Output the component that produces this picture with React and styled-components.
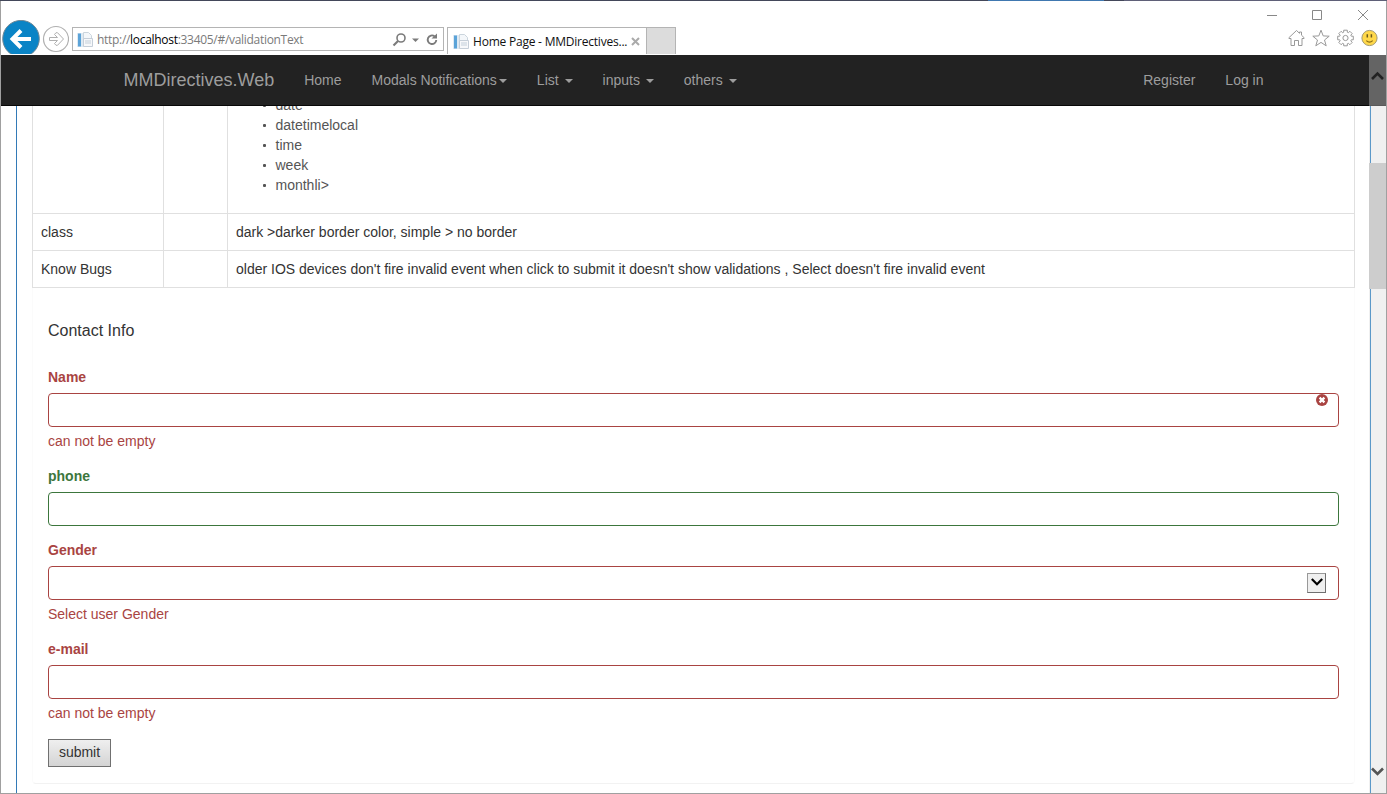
import React from "react";
import styled, { createGlobalStyle } from "styled-components";

const GlobalStyle = createGlobalStyle`
  * { box-sizing: border-box; }
  body {
    margin: 0;
    background: #fff;
    font-family: "Liberation Sans", Arial, sans-serif;
    font-size: 14px;
    line-height: 20px;
    color: #333;
    overflow: hidden;
  }
`;

const Window = styled.div`
  width: 1387px;
  height: 794px;
  display: flex;
  flex-direction: column;
  background: #fff;
  border: 1px solid #a0a0a0;
  border-top: 0;
`;

const DesktopEdge = styled.div`
  height: 1px;
  margin: 0 -1px;
  flex: none;
  background: linear-gradient(to right, #43475a 988px, #4078b0 988px 1104px, #43475a 1104px 1124px, #5f6078 1124px);
`;

const Chrome = styled.header`
  height: 54px;
  flex: none;
  display: flex;
  justify-content: space-between;
  font-family: "Open Sans", "Noto Sans", sans-serif;
  font-size: 12px;
`;

const Toolbar = styled.div`
  display: flex;
  align-items: flex-end;
  height: 53px;
`;

const BackClip = styled.div`
  width: 40px;
  height: 34px;
  overflow: hidden;
  svg { display: block; }
`;

const ForwardButton = styled.div`
  width: 27px;
  height: 28px;
  margin: 0 3px 1px 1px;
  svg { display: block; }
`;

const AddressBar = styled.div`
  width: 372px;
  height: 24px;
  margin-bottom: 3px;
  border: 1px solid #b4b4b4;
  display: flex;
  align-items: center;
  padding: 1px 4px 0 4px;
  color: #7a7a7a;
`;

const Url = styled.span`
  flex: 1;
  margin-left: 4px;
  font-size: 12px;
  letter-spacing: -0.3px;
  white-space: nowrap;
  b { font-weight: 400; color: #000; }
`;

const Tab = styled.div`
  width: 200px;
  height: 27px;
  margin-left: 3px;
  border: 1px solid #b4b4b4;
  border-bottom: 0;
  display: flex;
  align-items: center;
  padding: 1px 6px 0 5px;
  color: #111;
`;

const TabTitle = styled.span`
  flex: 1;
  margin-left: 4px;
  font-size: 12px;
  letter-spacing: -0.22px;
  white-space: nowrap;
`;

const NewTab = styled.div`
  width: 29px;
  height: 27px;
  background: #dcdcdc;
  border: 1px solid #b4b4b4;
  border-width: 1px 1px 0 0;
`;

const WindowSide = styled.div`
  display: flex;
  flex-direction: column;
  align-items: flex-end;
`;

const CaptionButtons = styled.div`
  display: flex;
  gap: 34px;
  padding: 8px 17px 0 0;
  height: 28px;
  svg { display: block; }
`;

const CommandIcons = styled.div`
  display: flex;
  gap: 7px;
  padding-right: 8px;
  svg { display: block; }
`;

const Viewport = styled.div`
  flex: 1;
  min-height: 0;
  display: flex;
`;

const Page = styled.div`
  width: 1368px;
  display: flex;
  flex-direction: column;
  overflow: hidden;
`;

const Navbar = styled.nav`
  height: 51px;
  flex: none;
  display: flex;
  align-items: center;
  padding: 0 90.5px 1px 107.5px;
  background: #222;
  border-bottom: 1px solid #080808;
`;

const Brand = styled.a`
  padding: 0 15px;
  font-size: 18px;
  color: #9d9d9d;
`;

const NavItem = styled.a`
  padding: 0 15px;
  color: #9d9d9d;
  white-space: pre;
  ${(p) => p.$pushed && "margin-left: auto;"}
`;

const Caret = styled.span`
  display: inline-block;
  margin-left: 2px;
  vertical-align: middle;
  border: 4px solid transparent;
  border-top-color: #9d9d9d;
  border-bottom: 0;
`;

const Content = styled.main`
  flex: 1;
  margin-left: 15px;
  padding-left: 15px;
  padding-right: 14px;
  border-left: 1px solid #337ab7;
  overflow: hidden;
`;

const Options = styled.section`
  border: 1px solid #e0e0e0;
  border-width: 0 0 0 1px;
  width: 1323px;
`;

const OptionRow = styled.div`
  display: grid;
  grid-template-columns: 131px 64px 1fr;
  height: ${(p) => p.$height || 37}px;
  border-bottom: 1px solid #e0e0e0;
`;

const Cell = styled.div`
  padding: 8px;
  border-right: 1px solid #e0e0e0;
  overflow: hidden;
`;

const TypeList = styled.ul`
  margin: -19px 0 0;
  padding: 0 0 0 39.5px;
  list-style: none;
  color: #555;
  li { display: flex; align-items: center; }
  li::before {
    content: "";
    width: 3px;
    height: 3px;
    margin: 1px 9.5px 0 -12.5px;
    border-radius: 1px;
    background: #555;
  }
`;

const Card = styled.form`
  width: 1323px;
  height: 496px;
  padding: 0 15px;
  border: 1px solid #fbfbfb;
  border-top: 0;
  border-bottom-color: #f2f2f2;
  border-radius: 0 0 4px 4px;
`;

const CardTitle = styled.h4`
  margin: 0;
  padding-top: 33px;
  height: 79px;
  font-size: 16px;
  font-weight: 400;
`;

const tones = { error: "#a94442", success: "#3c763d" };

const Field = styled.div`
  padding-bottom: ${(p) => (p.$hasHelp ? 15 : 14)}px;
  color: ${(p) => tones[p.$tone]};
`;

const Label = styled.label`
  display: block;
  height: 20px;
  margin-bottom: 6px;
  font-weight: 700;
`;

const Control = styled.div`
  height: 34px;
  border: 1px solid ${(p) => tones[p.$tone]};
  border-radius: 4px;
  display: flex;
  justify-content: flex-end;
  padding: ${(p) => (p.$select ? "6px 12px" : "0 10px")};
`;

const Help = styled.div`
  height: 20px;
  margin-top: 4px;
`;

const SelectArrow = styled.div`
  width: 19px;
  height: 20px;
  display: flex;
  align-items: center;
  justify-content: center;
  padding-bottom: 2px;
  background: #efefef;
  border: 1px solid #707070;
  border-top-color: #999;
  border-left-color: #999;
`;

const Submit = styled.button`
  display: block;
  width: 63px;
  height: 28px;
  margin-top: 1px;
  padding: 0 0 2px;
  border: 1px solid #707070;
  border-radius: 0;
  background: linear-gradient(#efefef, #d4d4d4);
  font: 14px/20px "Liberation Sans", Arial, sans-serif;
  color: #333;
`;

const Scrollbar = styled.aside`
  width: 17px;
  display: flex;
  flex-direction: column;
  background: linear-gradient(to right, #f0f0f0 1px, #5b98c8 1px 2px, #f0f0f0 2px);
  svg { display: block; }
`;

const ScrollUp = styled.div`
  height: 51px;
  padding: 16px 0 0 2px;
  background: #646464;
  border-bottom: 1px solid #595959;
`;

const Thumb = styled.div`
  height: 126px;
  margin-top: 57px;
  background: #cdcdcd;
`;

const ScrollDown = styled.div`
  margin-top: auto;
  padding: 0 0 16px 2px;
`;

const PageIcon = () => (
  <svg width="16" height="16" viewBox="0 0 16 16">
    <path d="M0 1h9v14H0z" fill="#dfeaf3" />
    <path d="M1 1.500h3v13H1z" fill="#5ba3d8" />
    <path d="M6.500 .5h5l3 3v6h-8z" fill="#f4f7fa" stroke="#cbd5dd" />
    <path d="M6.500 6.500h9v8h-9z" fill="#f7f8fa" stroke="#c5ced8" />
    <path d="M8 9h6M8 11h6" stroke="#c3cfda" />
  </svg>
);

const BackIcon = () => (
  <svg width="40" height="38" viewBox="0 0 40 38">
    <circle cx="20" cy="18.700" r="18.300" fill="#0a84c6" stroke="#6f8795" strokeWidth="1" />
    <path d="M30 19H12M20 10.500L11.500 19L20 27.500" fill="none" stroke="#fff" strokeWidth="4" />
  </svg>
);

const ForwardIcon = () => (
  <svg width="27" height="28" viewBox="0 0 27 28" fill="none" stroke="#b0b0b0">
    <circle cx="14" cy="14" r="12.500" strokeWidth="1.200" />
    <path d="M7.500 12.500h8L12.500 9.500l1.500-1.800h1.500L21.500 14l-6 6.300H14l-1.500-1.800 3-3h-8z" />
  </svg>
);

const ScrollChevron = ({ up, color }) => (
  <svg width="13" height="10" viewBox="0 0 13 10">
    <path
      d={up ? "M1 8L6.500 2.500L12 8" : "M1 1.500L6.500 7L12 1.500"}
      fill="none"
      stroke={color}
      strokeWidth="2.600"
    />
  </svg>
);

const ErrorIcon = () => (
  <svg width="12" height="12" viewBox="0 0 12 12">
    <circle cx="6" cy="6" r="6" fill="#a94442" />
    <path d="M3.600 3.600l4.800 4.800M8.400 3.600L3.600 8.400" stroke="#fff" strokeWidth="2.300" />
  </svg>
);

function FormField({ label, tone = "error", help, children, select }) {
  return (
    <Field $tone={tone} $hasHelp={Boolean(help)}>
      <Label>{label}</Label>
      <Control $tone={tone} $select={select}>{children}</Control>
      {help && <Help>{help}</Help>}
    </Field>
  );
}

export default function App() {
  return (
    <Window>
      <GlobalStyle />
      <DesktopEdge />
      <Chrome>
        <Toolbar>
          <BackClip><BackIcon /></BackClip>
          <ForwardButton><ForwardIcon /></ForwardButton>
          <AddressBar>
            <PageIcon />
            <Url>http://<b>localhost</b>:33405/#/validationText</Url>
            <svg width="48" height="16" viewBox="0 0 48 16" fill="none" stroke="#7b7b7b">
              <circle cx="10" cy="6" r="4" strokeWidth="1.600" />
              <path d="M7 9L2.500 13.500" strokeWidth="2.200" />
              <path d="M21 6.500h7l-3.500 3.500z" fill="#7b7b7b" stroke="none" />
              <path d="M43.500 4.200A4.300 4.300 0 1 0 45.300 8" strokeWidth="1.900" />
              <path d="M40.500 6.500h5.500V1.500z" fill="#7b7b7b" stroke="none" />
            </svg>
          </AddressBar>
          <Tab>
            <PageIcon />
            <TabTitle>Home Page - MMDirectives...</TabTitle>
            <svg width="9" height="9" viewBox="0 0 9 9">
              <path d="M1 1l7 7M8 1L1 8" stroke="#aaa" strokeWidth="2" />
            </svg>
          </Tab>
          <NewTab />
        </Toolbar>
        <WindowSide>
          <CaptionButtons>
            <svg width="11" height="12"><path d="M0 6.500h10" stroke="#888" /></svg>
            <svg width="11" height="12"><path d="M.5 1.500h9v9h-9z" fill="none" stroke="#888" /></svg>
            <svg width="12" height="12"><path d="M1 1l10 10M11 1L1 11" stroke="#888" /></svg>
          </CaptionButtons>
          <CommandIcons>
            <svg width="17" height="18" viewBox="0 0 17 18" fill="none" stroke="#999">
              <path d="M3 9.500H1L.8 8.800L8.500 1.500l3 2.800V3h2v3.200l2.700 2.600-.2.700H14V16.500h-3.500v-5h-4v5H3z" />
            </svg>
            <svg width="18" height="18" viewBox="0 0 18 18" fill="none" stroke="#999">
              <path d="M9 1.200l2.200 5.700 6 .3-4.700 3.800 1.700 5.800L9 13.400l-5.200 3.400L5.500 11 .8 7.200l6-.3z" />
            </svg>
            <svg width="17" height="18" viewBox="0 0 17 18" fill="none" stroke="#999">
              <path d="M6.700 1.200h3.600v2l1 .5 1.600-1.400 2.300 2.300-1.400 1.600.5 1h2v3.600h-2l-.5 1 1.400 1.600-2.300 2.300-1.600-1.400-1 .5v2H6.700v-2l-1-.5-1.600 1.400-2.300-2.300 1.400-1.600-.5-1h-2V7.200h2l.5-1L1.800 4.600l2.300-2.300 1.600 1.400 1-.5z" />
              <circle cx="8.500" cy="9" r="2.600" />
            </svg>
            <svg width="17" height="18" viewBox="0 0 17 18">
              <circle cx="8.500" cy="9" r="7.600" fill="#ffd84a" stroke="#a39a72" />
              <path d="M6.300 5.200v3.200M10.400 5.200v3.200" stroke="#6b5a1c" strokeWidth="1.500" />
              <path d="M5.300 11.600q3.200 3 6.400 0" fill="none" stroke="#8a6d14" strokeWidth="1.200" />
            </svg>
          </CommandIcons>
        </WindowSide>
      </Chrome>
      <Viewport>
        <Page>
          <Navbar>
            <Brand>MMDirectives.Web</Brand>
            <NavItem>Home</NavItem>
            <NavItem>Modals Notifications<Caret /></NavItem>
            <NavItem>List <Caret /></NavItem>
            <NavItem>inputs <Caret /></NavItem>
            <NavItem>others <Caret /></NavItem>
            <NavItem $pushed>Register</NavItem>
            <NavItem>Log in</NavItem>
          </Navbar>
          <Content>
            <Options>
              <OptionRow $height={108}>
                <Cell />
                <Cell />
                <Cell>
                  <TypeList>
                    <li>date</li>
                    <li>datetimelocal</li>
                    <li>time</li>
                    <li>week</li>
                    <li>monthli&gt;</li>
                  </TypeList>
                </Cell>
              </OptionRow>
              <OptionRow>
                <Cell>class</Cell>
                <Cell />
                <Cell>dark &gt;darker border color, simple &gt; no border</Cell>
              </OptionRow>
              <OptionRow>
                <Cell>Know Bugs</Cell>
                <Cell />
                <Cell>older IOS devices don't fire invalid event when click to submit it doesn't show validations , Select doesn't fire invalid event</Cell>
              </OptionRow>
            </Options>
            <Card>
              <CardTitle>Contact Info</CardTitle>
              <FormField label="Name" help="can not be empty">
                <ErrorIcon />
              </FormField>
              <FormField label="phone" tone="success" />
              <FormField label="Gender" help="Select user Gender" select>
                <SelectArrow>
                  <svg width="12" height="8" viewBox="0 0 12 8">
                    <path d="M.8 1L6 6.200L11.200 1" fill="none" stroke="#000" strokeWidth="2.200" />
                  </svg>
                </SelectArrow>
              </FormField>
              <FormField label="e-mail" help="can not be empty" />
              <Submit type="button">submit</Submit>
            </Card>
          </Content>
        </Page>
        <Scrollbar>
          <ScrollUp><ScrollChevron up color="#222" /></ScrollUp>
          <Thumb />
          <ScrollDown><ScrollChevron color="#555" /></ScrollDown>
        </Scrollbar>
      </Viewport>
    </Window>
  );
}
